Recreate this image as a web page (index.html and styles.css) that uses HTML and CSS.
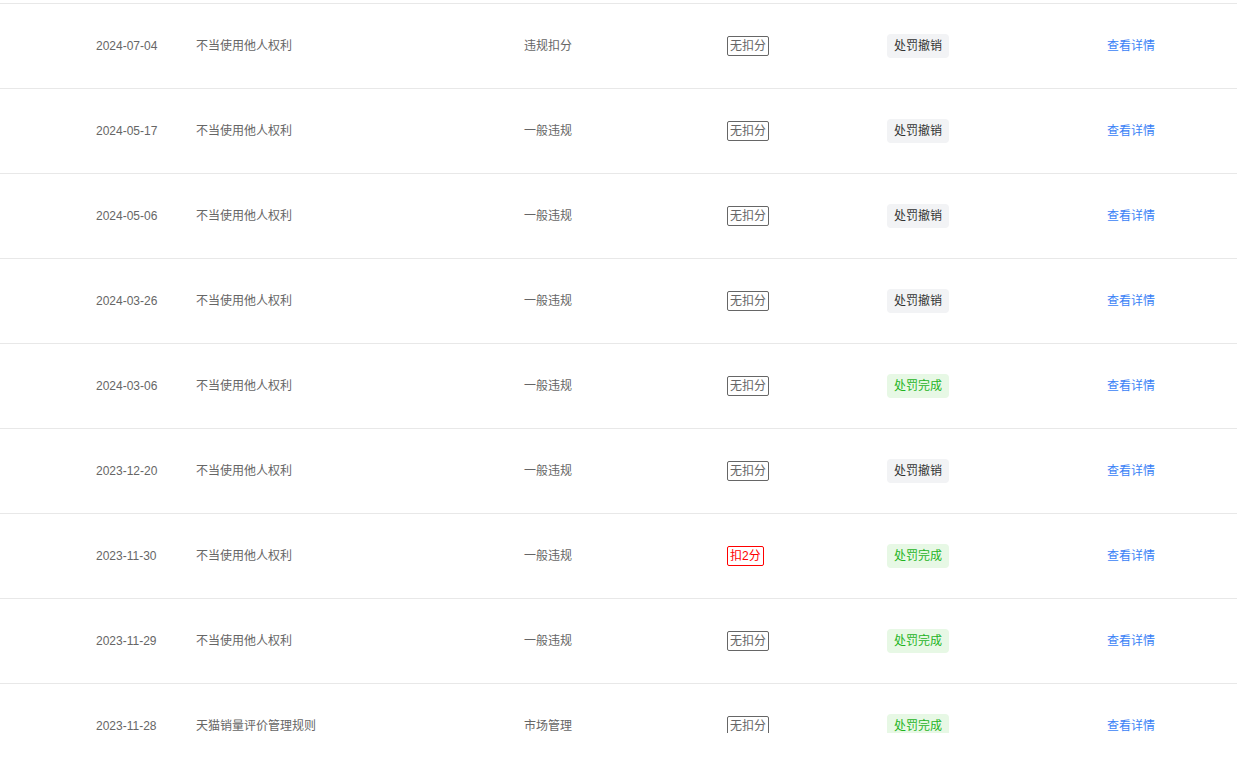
FILE: index.html
```html
<!DOCTYPE html>
<html lang="zh-CN">
<head>
<meta charset="utf-8">
<title>违规记录</title>
<link rel="stylesheet" href="styles.css">
</head>
<body>
<div class="viewport">
  <div class="table">
    <div class="row">
      <span class="date">2024-07-04</span><span class="rule">不当使用他人权利</span><span class="type">违规扣分</span>
      <span class="cell"><span class="score">无扣分</span></span>
      <span class="cell"><span class="status">处罚撤销</span></span>
      <a class="link" href="#">查看详情</a>
    </div>
    <div class="row">
      <span class="date">2024-05-17</span><span class="rule">不当使用他人权利</span><span class="type">一般违规</span>
      <span class="cell"><span class="score">无扣分</span></span>
      <span class="cell"><span class="status">处罚撤销</span></span>
      <a class="link" href="#">查看详情</a>
    </div>
    <div class="row">
      <span class="date">2024-05-06</span><span class="rule">不当使用他人权利</span><span class="type">一般违规</span>
      <span class="cell"><span class="score">无扣分</span></span>
      <span class="cell"><span class="status">处罚撤销</span></span>
      <a class="link" href="#">查看详情</a>
    </div>
    <div class="row">
      <span class="date">2024-03-26</span><span class="rule">不当使用他人权利</span><span class="type">一般违规</span>
      <span class="cell"><span class="score">无扣分</span></span>
      <span class="cell"><span class="status">处罚撤销</span></span>
      <a class="link" href="#">查看详情</a>
    </div>
    <div class="row">
      <span class="date">2024-03-06</span><span class="rule">不当使用他人权利</span><span class="type">一般违规</span>
      <span class="cell"><span class="score">无扣分</span></span>
      <span class="cell"><span class="status done">处罚完成</span></span>
      <a class="link" href="#">查看详情</a>
    </div>
    <div class="row">
      <span class="date">2023-12-20</span><span class="rule">不当使用他人权利</span><span class="type">一般违规</span>
      <span class="cell"><span class="score">无扣分</span></span>
      <span class="cell"><span class="status">处罚撤销</span></span>
      <a class="link" href="#">查看详情</a>
    </div>
    <div class="row">
      <span class="date">2023-11-30</span><span class="rule">不当使用他人权利</span><span class="type">一般违规</span>
      <span class="cell"><span class="score red">扣2分</span></span>
      <span class="cell"><span class="status done">处罚完成</span></span>
      <a class="link" href="#">查看详情</a>
    </div>
    <div class="row">
      <span class="date">2023-11-29</span><span class="rule">不当使用他人权利</span><span class="type">一般违规</span>
      <span class="cell"><span class="score">无扣分</span></span>
      <span class="cell"><span class="status done">处罚完成</span></span>
      <a class="link" href="#">查看详情</a>
    </div>
    <div class="row">
      <span class="date">2023-11-28</span><span class="rule">天猫销量评价管理规则</span><span class="type">市场管理</span>
      <span class="cell"><span class="score">无扣分</span></span>
      <span class="cell"><span class="status done">处罚完成</span></span>
      <a class="link" href="#">查看详情</a>
    </div>
  </div>
</div>
</body>
</html>
```

FILE: styles.css
```css
html, body {
  margin: 0;
  padding: 0;
  background: #fff;
}

body {
  font-family: "Liberation Sans", "Noto Sans CJK SC", sans-serif;
  font-size: 12px;
  color: #666;
}

.viewport {
  height: 733px;
  overflow: hidden;
  padding-top: 3px;
  box-sizing: border-box;
}

.row {
  display: grid;
  grid-template-columns: 100px 328px 203px 160px 220px 1fr;
  align-items: center;
  height: 85px;
  box-sizing: border-box;
  border-top: 1px solid #e8e8e8;
  padding-left: 96px;
  line-height: 18px;
}

.date {
  color: #666;
}

.rule {
  color: #666;
}

.type {
  color: #666;
}

.cell {
  display: flex;
}

.score {
  display: inline-block;
  border: 1px solid #666;
  border-radius: 2px;
  padding: 0 2px;
  line-height: 18px;
  color: #666;
}

.score.red {
  border-color: #f00;
  color: #f00;
}

.status {
  display: inline-block;
  padding: 3px 7px;
  line-height: 18px;
  border-radius: 4px;
  background: #f2f3f5;
  color: #333;
}

.status.done {
  background: #e7f8e5;
  color: #1fb41f;
}

.link {
  color: #3a7ff6;
  text-decoration: none;
}
```
